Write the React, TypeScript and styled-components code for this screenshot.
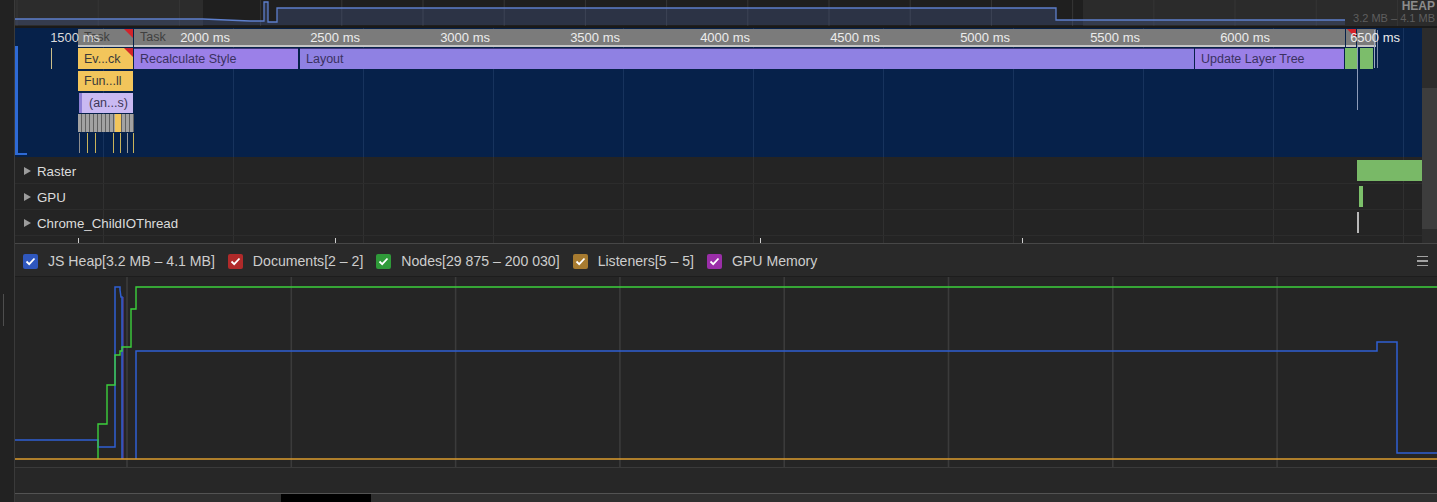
import React from "react";
import styled, { createGlobalStyle } from "styled-components";

const GlobalStyle = createGlobalStyle`
  html, body { margin: 0; padding: 0; background: #242424; }
  body {
    width: 1437px;
    height: 502px;
    overflow: hidden;
    font-family: "Liberation Sans", Arial, sans-serif;
  }
`;

// main column starts at page x = 15
const X0 = 15;
const rx = (pageX: number) => pageX - X0;

const FLAME_GRID = Array.from({ length: 11 }, (_, i) => 88 + 130 * i);
const MEM_GRID = Array.from({ length: 8 }, (_, i) => 112 + 164.3 * i);
const OVERVIEW_GRID = Array.from({ length: 18 }, (_, i) => 2 + 81.2 * i);

type Kind = "task" | "script" | "recalc" | "layout" | "paint" | "anon" | "stripe";

const KINDS: Record<Kind, { bg: string; fg: string }> = {
  task: { bg: "#7b7b7b", fg: "#404040" },
  script: { bg: "#f2c55b", fg: "#3a3a3a" },
  recalc: { bg: "#9b80e8", fg: "#3a3160" },
  layout: { bg: "#8f81e3", fg: "#3a3160" },
  paint: { bg: "#7cbd6b", fg: "#333" },
  anon: { bg: "#c9b9f2", fg: "#3d3656" },
  stripe: { bg: "repeating-linear-gradient(90deg, #a2a2a2 0 3px, #616161 3px 4px)", fg: "#333" },
};

const ROWS = [
  { top: 1, h: 18 },
  { top: 20, h: 21 },
  { top: 43, h: 20 },
  { top: 65, h: 20 },
  { top: 86, h: 18 },
  { top: 105, h: 20 },
];

type FlameBar = { x1: number; x2: number; row: number; kind: Kind; label?: string; flag?: boolean };

const BARS: FlameBar[] = [
  { x1: 78, x2: 133, row: 0, kind: "task", label: "Task", flag: true },
  { x1: 134, x2: 1345, row: 0, kind: "task", label: "Task" },
  { x1: 1346, x2: 1356, row: 0, kind: "task", flag: true },
  { x1: 1357, x2: 1376, row: 0, kind: "task" },
  { x1: 78, x2: 133, row: 1, kind: "script", label: "Ev...ck", flag: true },
  { x1: 134, x2: 298, row: 1, kind: "recalc", label: "Recalculate Style" },
  { x1: 300, x2: 1194, row: 1, kind: "layout", label: "Layout" },
  { x1: 1195, x2: 1344, row: 1, kind: "recalc", label: "Update Layer Tree" },
  { x1: 1345, x2: 1358, row: 1, kind: "paint" },
  { x1: 1360, x2: 1373, row: 1, kind: "paint" },
  { x1: 78, x2: 133, row: 2, kind: "script", label: "Fun...ll" },
  { x1: 79, x2: 133, row: 3, kind: "anon", label: "(an...s)" },
  { x1: 78, x2: 134, row: 4, kind: "stripe" },
  { x1: 115, x2: 118, row: 4, kind: "script" },
];

const TICKS: { x: number; top: number; h: number; color: string }[] = [
  { x: 51, top: 20, h: 21, color: "#cbbf8a" },
  { x: 79, top: 105, h: 20, color: "#8e8e8e" },
  { x: 87, top: 105, h: 20, color: "#c9b35a" },
  { x: 95, top: 105, h: 20, color: "#c9b35a" },
  { x: 113, top: 105, h: 20, color: "#c9b35a" },
  { x: 120, top: 105, h: 20, color: "#c9b35a" },
  { x: 127, top: 105, h: 20, color: "#9a9a9a" },
  { x: 133, top: 105, h: 20, color: "#c9b35a" },
  { x: 1357, top: 17, h: 65, color: "#8d9bb8" },
  { x: 1374, top: 2, h: 38, color: "#9aa7c0" },
  { x: 1377, top: 2, h: 38, color: "#7f8ca8" },
];

const COUNTERS = [
  { color: "#2f57bd", label: "JS Heap[3.2 MB – 4.1 MB]" },
  { color: "#b02a2a", label: "Documents[2 – 2]" },
  { color: "#2f9a39", label: "Nodes[29 875 – 200 030]" },
  { color: "#a77b30", label: "Listeners[5 – 5]" },
  { color: "#9a2ea8", label: "GPU Memory" },
];

const Frame = styled.div`
  display: flex;
  width: 1437px;
  height: 502px;
  background: #242424;
  overflow: hidden;
`;

const Gutter = styled.div`
  width: 15px;
  flex: none;
  background: #222;
  border-right: 1px solid #3a3a3a;
  display: flex;
  flex-direction: column;
  padding-top: 294px;
  box-sizing: border-box;
`;

const Grip = styled.div`
  width: 1px;
  height: 32px;
  margin-left: 3px;
  background: #4e4e4e;
`;

const Main = styled.div`
  flex: 1;
  min-width: 0;
  display: flex;
  flex-direction: column;
`;

const Overview = styled.div`
  height: 28px;
  flex: none;
  position: relative;
  border-bottom: 2px solid #1a1a1a;
  box-sizing: border-box;
  svg { display: block; }
`;

const HeapLabel = styled.div`
  position: absolute;
  right: 2px;
  top: 0;
  text-align: right;
  line-height: 12px;
  b {
    display: block;
    font-size: 12px;
    color: #8c8c8c;
  }
  span {
    display: block;
    font-size: 11px;
    color: #5e5e5e;
  }
`;

const Timeline = styled.div`
  height: 215px;
  flex: none;
  display: flex;
`;

const TimelineBody = styled.div`
  flex: 1;
  min-width: 0;
  display: flex;
  flex-direction: column;
`;

const Flame = styled.div`
  height: 129px;
  flex: none;
  position: relative;
  background: #06214a;
  overflow: hidden;
  font-size: 12.5px;
`;

const GridLine = styled.div<{ $color: string }>`
  position: absolute;
  top: 0;
  bottom: 0;
  width: 1px;
  background: ${(p) => p.$color};
`;

const Bar = styled.div<{ $kind: Kind; $flag?: boolean }>`
  position: absolute;
  box-sizing: border-box;
  background: ${(p) => KINDS[p.$kind].bg};
  color: ${(p) => KINDS[p.$kind].fg};
  padding-left: ${(p) => (p.$kind === "anon" ? 7 : 6)}px;
  white-space: nowrap;
  overflow: hidden;
  display: flex;
  align-items: center;
  ${(p) => (p.$kind === "task" ? "border-bottom: 2px solid #c4c4c4;" : "")}
  ${(p) => (p.$kind === "anon" ? "border-left: 3px solid #8d7fd6;" : "")}
  ${(p) => (p.$kind === "recalc" || p.$kind === "layout" ? "border-top: 1px solid #3c3478;" : "")}
  &::after {
    content: "";
    display: ${(p) => (p.$flag ? "block" : "none")};
    position: absolute;
    top: 0;
    right: 0;
    width: 9px;
    height: 9px;
    background: #d3232a;
    clip-path: polygon(0 0, 100% 0, 100% 100%);
  }
`;

const Tick = styled.div<{ $color: string }>`
  position: absolute;
  width: 1px;
  background: ${(p) => p.$color};
`;

const RulerLabel = styled.div<{ $onNavy?: boolean }>`
  position: absolute;
  top: 2px;
  line-height: 16px;
  font-size: 13px;
  color: ${(p) => (p.$onNavy ? "#dadada" : "#ececec")};
  transform: translateX(-100%);
  white-space: nowrap;
  z-index: 2;
`;

const SelectionEdge = styled.div`
  position: absolute;
  left: 0;
  top: 18px;
  width: 3px;
  height: 109px;
  background: #2e6ad6;
  &::after {
    content: "";
    position: absolute;
    left: 0;
    bottom: 0;
    width: 12px;
    height: 2px;
    background: #2e6ad6;
  }
`;

const Threads = styled.div`
  height: 86px;
  flex: none;
  position: relative;
  background: #242424;
  padding-top: 1px;
  box-sizing: border-box;
`;

const ThreadRow = styled.div`
  height: 26px;
  position: relative;
  border-bottom: 1px solid #2c2c2c;
  box-sizing: border-box;
  display: flex;
  align-items: center;
  padding-left: 9px;
  padding-top: 1px;
  font-size: 13.3px;
  color: #dcdcdc;
  z-index: 1;
`;

const Caret = styled.span`
  width: 0;
  height: 0;
  border-left: 7px solid #9c9c9c;
  border-top: 4.5px solid transparent;
  border-bottom: 4.5px solid transparent;
  margin-right: 6px;
`;

const TrackEvent = styled.div<{ $color: string }>`
  position: absolute;
  background: ${(p) => p.$color};
`;

const Scrollbar = styled.div`
  width: 15px;
  flex: none;
  background: #2c2c2c;
  display: flex;
  flex-direction: column;
`;

const ScrollThumb = styled.div`
  margin-top: 60px;
  height: 141px;
  background: #3d3d3d;
`;

const CounterBar = styled.div`
  height: 34px;
  flex: none;
  border-top: 1px solid #474747;
  border-bottom: 1px solid #1d1d1d;
  box-sizing: border-box;
  background: #292929;
  display: flex;
  align-items: center;
  padding-left: 8px;
  padding-right: 9px;
  padding-top: 2px;
  font-size: 14.1px;
  color: #cdcdcd;
`;

const Counter = styled.label`
  display: flex;
  align-items: center;
  margin-right: 13px;
  white-space: nowrap;
`;

const Check = styled.span<{ $color: string }>`
  width: 15px;
  height: 15px;
  border-radius: 2px;
  background: ${(p) => p.$color};
  margin-right: 10px;
  display: flex;
  align-items: center;
  justify-content: center;
`;

const Menu = styled.div`
  margin-left: auto;
  width: 11px;
  display: flex;
  flex-direction: column;
  gap: 3px;
  span {
    height: 1.5px;
    background: #a3a3a3;
  }
`;

const Chart = styled.div`
  height: 190px;
  flex: none;
  background: #252525;
  svg { display: block; }
`;

const Footer = styled.div`
  height: 26px;
  flex: none;
  border-top: 1px solid #3a3a3a;
  box-sizing: border-box;
  background: #272727;
`;

const HScroll = styled.div`
  height: 9px;
  flex: none;
  border-top: 1px solid #535353;
  box-sizing: border-box;
  background: #2f2f2f;
  display: flex;
`;

const HThumb = styled.div`
  margin-left: ${rx(281)}px;
  width: 90px;
  background: #000;
`;

const CheckMark = () => (
  <svg width="11" height="9" viewBox="0 0 11 9">
    <polyline points="1.5,4.5 4.2,7.2 9.5,1.5" fill="none" stroke="#fff" strokeWidth="1.8" />
  </svg>
);

const OverviewChart = () => {
  const line = "M0 19 H188 L235 21 H249 V2 H253 V22 H262 V8 H1041 V20 H1330";
  return (
    <svg width="1422" height="26">
      <rect x="0" y="0" width="188" height="26" fill="#2c2c2c" />
      <rect x="188" y="0" width="880" height="26" fill="#1f1f1f" />
      <rect x="1068" y="0" width="354" height="26" fill="#2b2b2b" />
      {OVERVIEW_GRID.map((x) => (
        <line key={x} x1={x} x2={x} y1="0" y2="26" stroke="#363636" strokeWidth="1" />
      ))}
      <path d={`${line} V25 H0 Z`} fill="rgba(78,104,170,0.28)" />
      <path d={line} fill="none" stroke="#5d7fcc" strokeWidth="1.3" />
    </svg>
  );
};

const MemoryChart = () => (
  <svg width="1422" height="190">
    {MEM_GRID.map((x) => (
      <line key={x} x1={x} x2={x} y1="0" y2="190" stroke="#3b3b3b" strokeWidth="1.6" />
    ))}
    <path d="M108 20 V182" fill="none" stroke="#6a46c0" strokeWidth="1" />
    <path d="M0 163 H83 V170 H100 V10 H105 V13 L106 20 H107 V182" fill="none" stroke="#2f5fd2" strokeWidth="1.5" />
    <path d="M121 182 V74 H1362 V65 H1382 V176 H1422" fill="none" stroke="#2f5fd2" strokeWidth="1.5" />
    <path
      d="M83 182 V147 H92 V108 H100 V78 H105 V74 H107 V70 H116 V32 H121 V10 H1422"
      fill="none"
      stroke="#3cd13c"
      strokeWidth="1.4"
    />
    <path d="M0 182 H1422" fill="none" stroke="#dc9d2e" strokeWidth="1.5" />
  </svg>
);

export default function App() {
  return (
    <>
      <GlobalStyle />
      <Frame>
        <Gutter>
          <Grip />
        </Gutter>
        <Main>
          <Overview>
            <OverviewChart />
            <HeapLabel>
              <b>HEAP</b>
              <span>3.2 MB – 4.1 MB</span>
            </HeapLabel>
          </Overview>

          <Timeline>
            <TimelineBody>
              <Flame>
                {FLAME_GRID.map((x) => (
                  <GridLine key={x} $color="rgba(150,180,230,0.12)" style={{ left: x }} />
                ))}
                {BARS.map((b, i) => (
                  <Bar
                    key={i}
                    $kind={b.kind}
                    $flag={b.flag}
                    style={{
                      left: rx(b.x1),
                      width: b.x2 - b.x1,
                      top: ROWS[b.row].top,
                      height: ROWS[b.row].h,
                    }}
                  >
                    {b.label}
                  </Bar>
                ))}
                {TICKS.map((t, i) => (
                  <Tick key={i} $color={t.color} style={{ left: rx(t.x), top: t.top, height: t.h }} />
                ))}
                {FLAME_GRID.map((x, i) => (
                  <RulerLabel key={x} $onNavy={i === 0} style={{ left: x - 3 }}>
                    {1500 + i * 500} ms
                  </RulerLabel>
                ))}
                <SelectionEdge />
              </Flame>

              <Threads>
                {FLAME_GRID.map((x) => (
                  <GridLine key={x} $color="#303030" style={{ left: x }} />
                ))}
                <ThreadRow>
                  <Caret />
                  Raster
                  <TrackEvent
                    $color="#79b967"
                    style={{ left: rx(1357), width: 65, top: 2, height: 21 }}
                  />
                </ThreadRow>
                <ThreadRow>
                  <Caret />
                  GPU
                  <TrackEvent $color="#7cc06a" style={{ left: rx(1359), width: 1.5, top: 2, height: 21 }} />
                  <TrackEvent $color="#7cc06a" style={{ left: rx(1361), width: 1.5, top: 2, height: 21 }} />
                </ThreadRow>
                <ThreadRow>
                  <Caret />
                  Chrome_ChildIOThread
                  <TrackEvent $color="#b8b8b8" style={{ left: rx(1357), width: 1.5, top: 2, height: 21 }} />
                </ThreadRow>
                {[78, 335, 760, 1022].map((x) => (
                  <Tick key={x} $color="#d0d0d0" style={{ left: rx(x), top: 81, height: 5 }} />
                ))}
              </Threads>
            </TimelineBody>
            <Scrollbar>
              <ScrollThumb />
            </Scrollbar>
          </Timeline>

          <CounterBar>
            {COUNTERS.map((c) => (
              <Counter key={c.label}>
                <Check $color={c.color}>
                  <CheckMark />
                </Check>
                {c.label}
              </Counter>
            ))}
            <Menu>
              <span />
              <span />
              <span />
            </Menu>
          </CounterBar>

          <Chart>
            <MemoryChart />
          </Chart>
          <Footer />
          <HScroll>
            <HThumb />
          </HScroll>
        </Main>
      </Frame>
    </>
  );
}
